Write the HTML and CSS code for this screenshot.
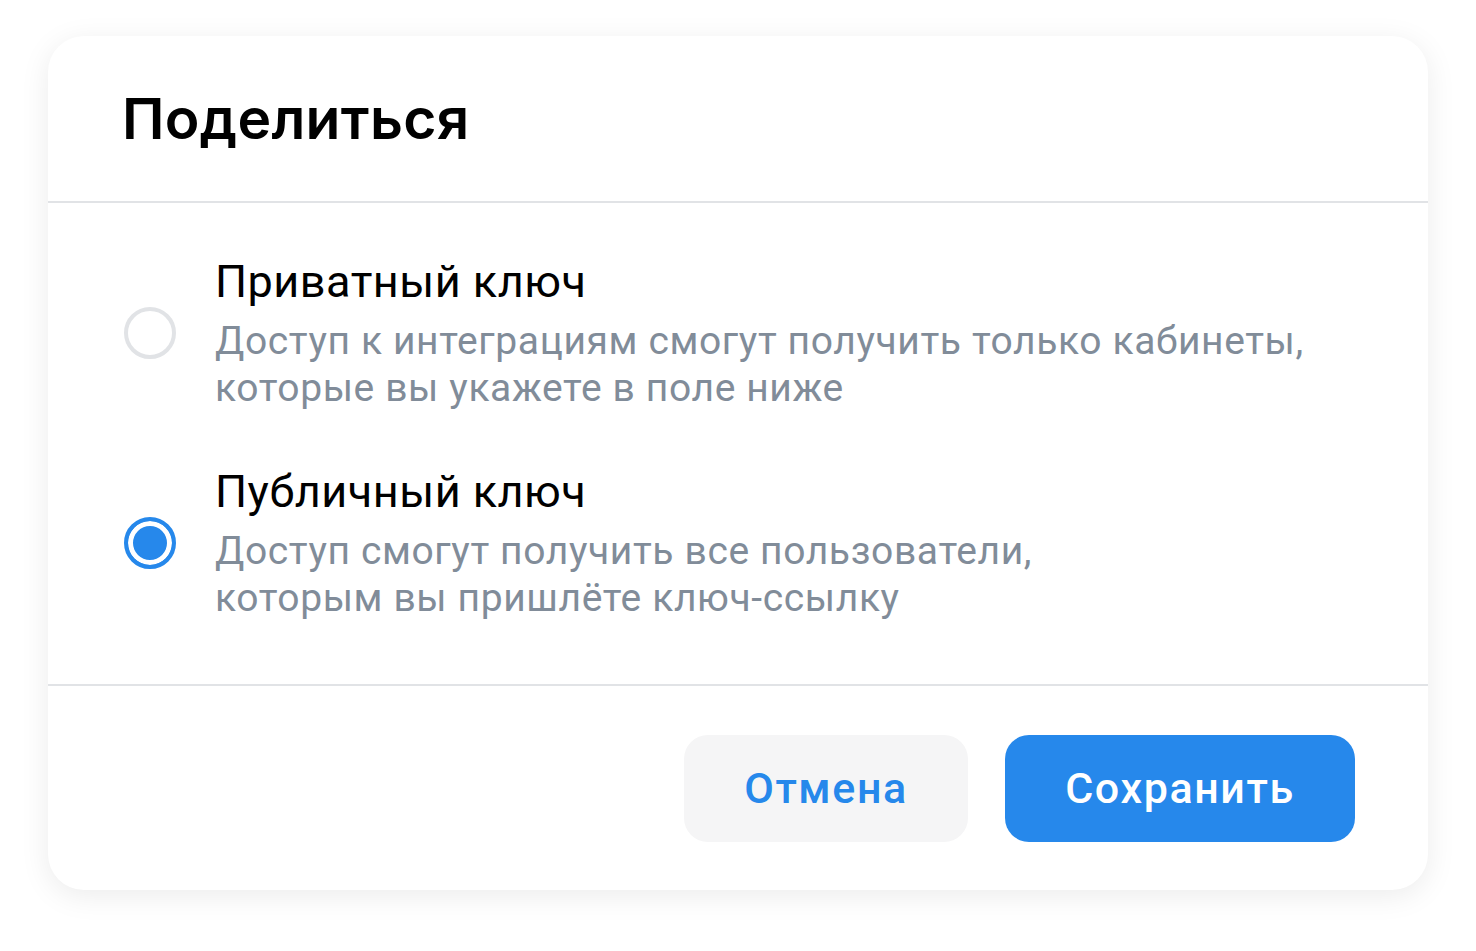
FILE: index.html
```html
<!DOCTYPE html>
<html>
<head>
	<meta http-equiv="Content-Type" content="text/html;charset=UTF-8">
	<title>Поделиться</title>
	<link rel="stylesheet" href="styles.css">
</head>
<body>
	<div class="page">
		<div class="card">
			<div class="head">
				<h1 class="title">Поделиться</h1>
			</div>
			<div class="options">
				<label class="option">
					<span class="radio"></span>
					<span class="text">
						<span class="name">Приватный ключ</span>
						<span class="desc">Доступ к интеграциям смогут получить только кабинеты,<br>которые вы укажете в поле ниже</span>
					</span>
				</label>
				<label class="option">
					<span class="radio checked"></span>
					<span class="text">
						<span class="name">Публичный ключ</span>
						<span class="desc">Доступ смогут получить все пользователи,<br>которым вы пришлёте ключ-ссылку</span>
					</span>
				</label>
			</div>
			<div class="foot">
				<button class="btn btn-cancel">Отмена</button>
				<button class="btn btn-save">Сохранить</button>
			</div>
		</div>
	</div>
</body>
</html>
```

FILE: styles.css
```css
*{ margin: 0; padding: 0; box-sizing: border-box; }
body{ background: #fff; font-family: Roboto, "Noto Sans", sans-serif; }
.page{ padding: 36px 48px; }
.card{ width: 1380px; height: 854px; background: #fff; border-radius: 36px; box-shadow: 0 6px 30px rgba(0,0,0,0.08); display: flex; flex-direction: column; }

.head{ height: 167px; padding-left: 74px; display: flex; align-items: center; border-bottom: 2px solid #e1e3e6; }
.title{ font-family: Inter, "Noto Sans", sans-serif; font-weight: 600; font-size: 57px; color: #000; letter-spacing: 0.3px; }

.options{ flex: 1; display: flex; flex-direction: column; gap: 51px; padding: 50px 74px 0 76px; border-bottom: 2px solid #e1e3e6; }
.option{ display: flex; align-items: center; gap: 39px; }
.radio{ flex: none; width: 52px; height: 52px; border-radius: 50%; border: 4px solid #e1e3e6; }
.radio.checked{ border-color: #2688eb; background: #2688eb; box-shadow: inset 0 0 0 5px #fff; }
.text{ display: flex; flex-direction: column; }
.name{ font-size: 45px; line-height: 58px; margin-bottom: 7px; color: #000; letter-spacing: 0.5px; }
.desc{ font-size: 39px; line-height: 47px; color: #818c99; letter-spacing: 0.62px; }

.foot{ height: 204px; padding: 0 73px; display: flex; align-items: center; justify-content: flex-end; gap: 37px; }
.btn{ border: none; height: 107px; border-radius: 24px; font-family: Roboto, "Noto Sans", sans-serif; font-weight: 500; font-size: 43px; letter-spacing: 1.6px; }
.btn-cancel{ width: 284px; background: #f5f5f6; color: #2688eb; }
.btn-save{ width: 350px; background: #2688eb; color: #fff; }
```
